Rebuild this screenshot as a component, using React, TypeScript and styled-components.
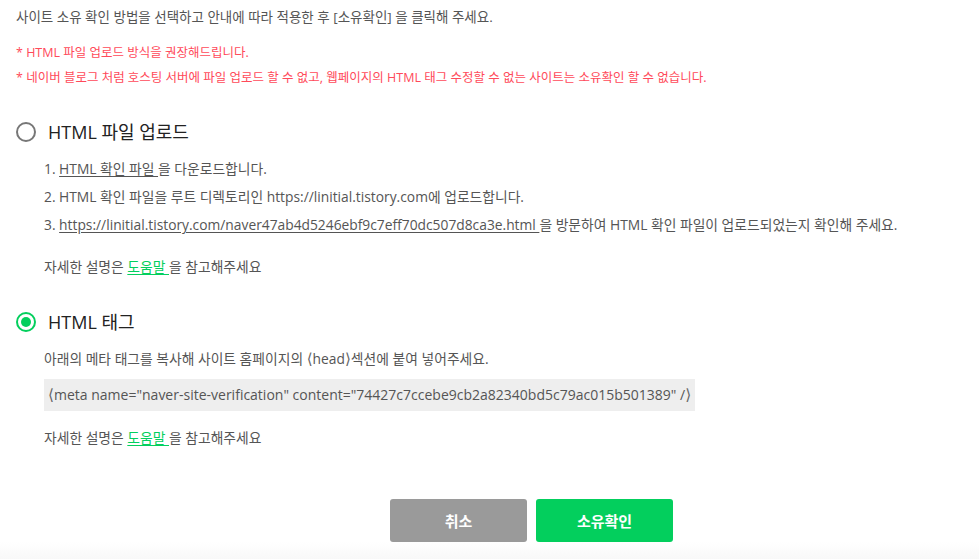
import React, { useState } from "react";
import styled, { createGlobalStyle } from "styled-components";

const GlobalStyle = createGlobalStyle`
  html, body {
    margin: 0;
    padding: 0;
    background: #fff;
  }
  body {
    font-family: "Open Sans", "Noto Sans CJK KR", sans-serif;
    color: #555;
  }
`;

const METHODS = { FILE: "file", TAG: "tag" };

const App = () => {
  const [method, setMethod] = useState(METHODS.TAG);

  return (
    <>
      <GlobalStyle />
      <Page>
        <Content>
          <Intro>사이트 소유 확인 방법을 선택하고 안내에 따라 적용한 후 [소유확인] 을 클릭해 주세요.</Intro>
          <Notices>
            <Notice>* HTML 파일 업로드 방식을 권장해드립니다.</Notice>
            <Notice>* 네이버 블로그 처럼 호스팅 서버에 파일 업로드 할 수 없고, 웹페이지의 HTML 태그 수정할 수 없는 사이트는 소유확인 할 수 없습니다.</Notice>
          </Notices>

          <Option>
            <OptionHeader onClick={() => setMethod(METHODS.FILE)}>
              <Radio $checked={method === METHODS.FILE} />
              <OptionTitle>HTML 파일 업로드</OptionTitle>
            </OptionHeader>
            <OptionBody>
              <Line>1. <Link>HTML 확인 파일 </Link>을 다운로드합니다.</Line>
              <Line>2. HTML 확인 파일을 루트 디렉토리인 https://linitial.tistory.com에 업로드합니다.</Line>
              <Line>3. <Link>https://linitial.tistory.com/naver47ab4d5246ebf9c7eff70dc507d8ca3e.html </Link>을 방문하여 HTML 확인 파일이 업로드되었는지 확인해 주세요.</Line>
              <Help>자세한 설명은 <HelpLink>도움말 </HelpLink>을 참고해주세요</Help>
            </OptionBody>
          </Option>

          <Option>
            <OptionHeader onClick={() => setMethod(METHODS.TAG)}>
              <Radio $checked={method === METHODS.TAG} />
              <OptionTitle>HTML 태그</OptionTitle>
            </OptionHeader>
            <OptionBody>
              <Line>아래의 메타 태그를 복사해 사이트 홈페이지의 <Angle>⟨</Angle>head<Angle>⟩</Angle>섹션에 붙여 넣어주세요.</Line>
              <CodeBox><Angle>⟨</Angle>meta name="naver-site-verification" content="74427c7ccebe9cb2a82340bd5c79ac015b501389" /<Angle>⟩</Angle></CodeBox>
              <Help>자세한 설명은 <HelpLink>도움말 </HelpLink>을 참고해주세요</Help>
            </OptionBody>
          </Option>

          <Buttons>
            <Button $variant="cancel">취소</Button>
            <Button $variant="confirm">소유확인</Button>
          </Buttons>
        </Content>
        <Fade />
      </Page>
    </>
  );
};

export default App;

const Page = styled.div`
  width: 979px;
  height: 559px;
  display: flex;
  flex-direction: column;
  overflow: hidden;
`;

const Content = styled.div`
  flex: 1;
  padding: 7px 16px 0;
`;

const Intro = styled.div`
  font-size: 13.5px;
  line-height: 20px;
  color: #555;
`;

const Notices = styled.div`
  margin-top: 16px;
  display: flex;
  flex-direction: column;
  gap: 6px;
`;

const Notice = styled.div`
  font-size: 12.5px;
  line-height: 19px;
  color: #ff4a5a;
`;

const Option = styled.div`
  margin-top: 32px;

  & + & {
    margin-top: 28px;
  }
`;

const OptionHeader = styled.div`
  display: flex;
  align-items: center;
  gap: 12px;
  cursor: pointer;
`;

const Radio = styled.span<{ $checked: boolean }>`
  width: 20px;
  height: 20px;
  box-sizing: border-box;
  border-radius: 50%;
  border: 2px solid ${(p) => (p.$checked ? "#03cf5d" : "#777")};
  display: flex;
  align-items: center;
  justify-content: center;

  &::after {
    content: "";
    width: 10px;
    height: 10px;
    border-radius: 50%;
    background: #03cf5d;
    display: ${(p) => (p.$checked ? "block" : "none")};
  }
`;

const OptionTitle = styled.span`
  font-size: 18px;
  line-height: 26px;
  color: #222;
`;

const OptionBody = styled.div`
  padding-left: 28px;
  margin-top: 10px;
  display: flex;
  flex-direction: column;
`;

const Line = styled.div`
  font-size: 13.8px;
  line-height: 28px;
  color: #555;
`;

const Angle = styled.span`
  font-family: "DejaVu Sans", sans-serif;
  font-size: 1.1em;
  line-height: 1;
  color: #666;
`;

const Link = styled.span`
  text-decoration: underline;
  text-underline-offset: 2px;
`;

const Help = styled.div`
  margin-top: 14px;
  font-size: 13.8px;
  line-height: 28px;
  color: #555;
`;

const HelpLink = styled.span`
  color: #03cf5d;
  text-decoration: underline;
  text-underline-offset: 2px;
`;

const CodeBox = styled.div`
  align-self: flex-start;
  margin: 6px 0 -1px;
  padding: 0 4px;
  height: 32px;
  line-height: 32px;
  font-size: 14px;
  color: #555;
  background: #eee;
`;

const Buttons = styled.div`
  margin-top: 47px;
  display: flex;
  justify-content: center;
  gap: 9px;
  padding-left: 84px;
`;

const Button = styled.button<{ $variant: "cancel" | "confirm" }>`
  width: 137px;
  height: 43px;
  border: none;
  border-radius: 3px;
  font-family: "Noto Sans CJK KR", sans-serif;
  font-size: 15px;
  font-weight: 700;
  color: #fff;
  background: ${(p) => (p.$variant === "confirm" ? "#03cf5d" : "#9a9a9a")};
  cursor: pointer;
`;

const Fade = styled.div`
  height: 20px;
  flex-shrink: 0;
  background: linear-gradient(#fff, #f7f7f7);
`;
